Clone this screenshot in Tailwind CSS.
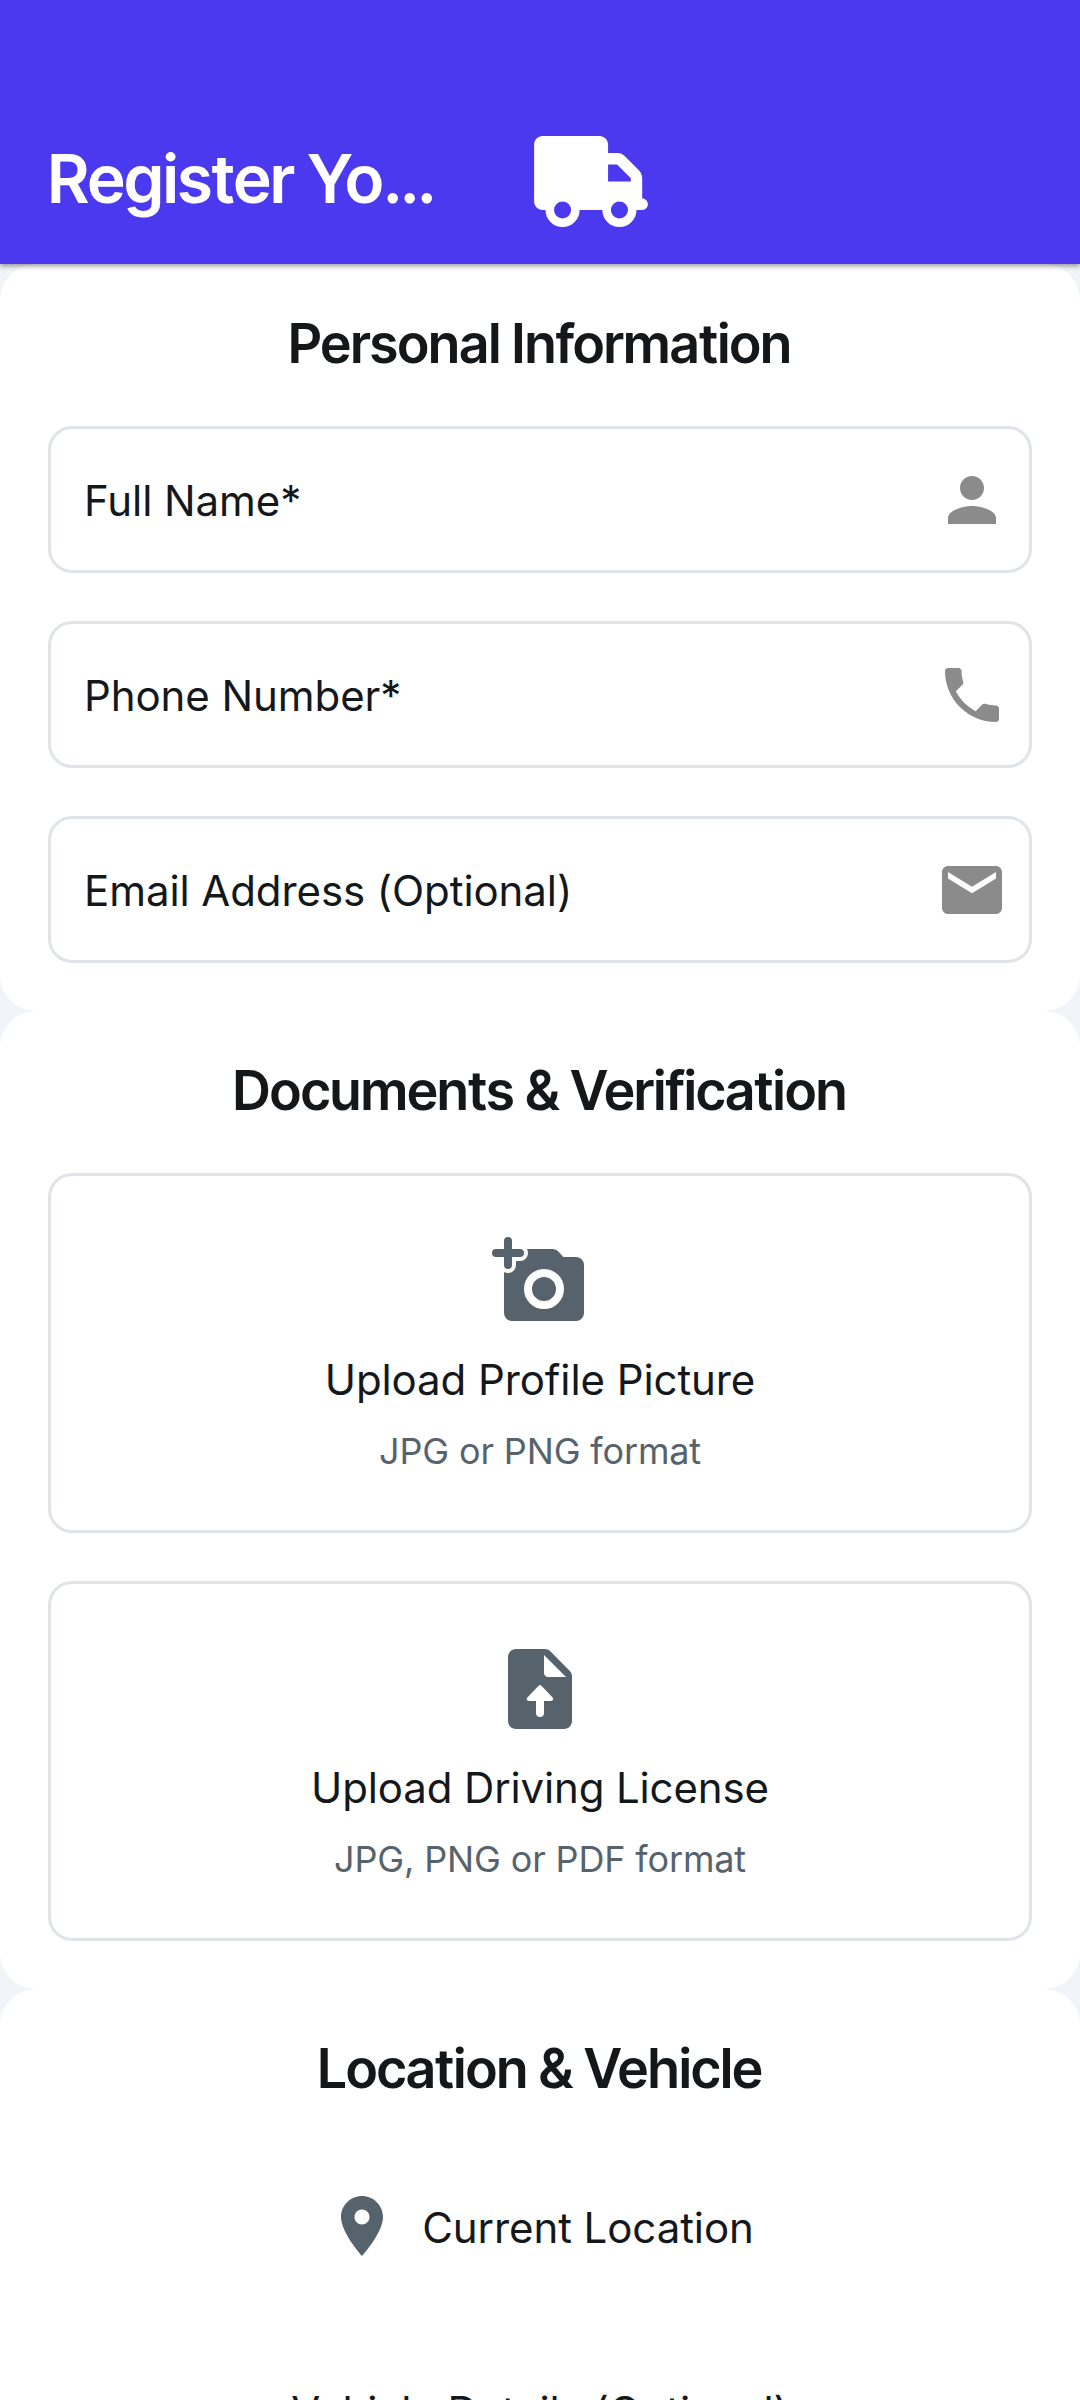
<!DOCTYPE html>
<html lang="en">
<head>
<meta charset="utf-8">
<title>Register Your Vehicle</title>
<script src="https://cdn.jsdelivr.net/npm/@tailwindcss/browser@4"></script>
</head>
<body class="flex h-[2400px] w-[1080px] flex-col overflow-hidden bg-[#f1f4f8] font-['Inter',sans-serif] text-[42px] leading-[51px] font-normal tracking-[-0.08px] text-[#14181b] antialiased">

<header class="relative z-10 flex h-[264px] shrink-0 items-center bg-[#4b39ef] px-12 pt-[96px] shadow-[0_2px_5px_rgba(0,0,0,0.4)]">
  <h1 class="w-[486px] pb-0.5 font-['Inter_Tight','Inter',sans-serif] text-[66px] leading-[80px] font-semibold tracking-normal whitespace-nowrap text-white">Register Yo…</h1>
  <svg class="mt-0.5 h-[91px] w-[114px]" viewBox="0 0 640 512" fill="#fff"><path d="M48 0C21.5 0 0 21.5 0 48V368c0 26.5 21.5 48 48 48H64c0 53 43 96 96 96s96-43 96-96H384c0 53 43 96 96 96s96-43 96-96h32c17.7 0 32-14.3 32-32s-14.3-32-32-32V237.300c0-17-6.700-33.300-18.700-45.300L512 114.700c-12-12-28.300-18.700-45.300-18.700H416V48c0-26.500-21.500-48-48-48H48zM416 160h50.700L544 237.300V256H416V160zM112 416a48 48 0 1 1 96 0 48 48 0 1 1-96 0zm368-48a48 48 0 1 1 0 96 48 48 0 1 1 0-96z"/></svg>
</header>

<section class="h-[747px] shrink-0 rounded-[36px] bg-white px-12 pt-11">
  <h2 class="mb-[46px] text-center font-['Inter_Tight','Inter',sans-serif] text-[54px] leading-[72px] font-semibold tracking-normal">Personal Information</h2>
  <div class="flex flex-col gap-12">
    <div class="flex h-[147px] items-center justify-between rounded-[24px] border-[3px] border-[#e0e3e7] pt-px pr-[21px] pl-[33px]">
      <span class="pt-px">Full Name*</span>
      <svg class="size-[72px]" viewBox="0 0 24 24" fill="#8b8b8b"><path d="M12 12c2.210 0 4-1.790 4-4s-1.790-4-4-4-4 1.790-4 4 1.790 4 4 4zm0 2c-2.670 0-8 1.340-8 4v2h16v-2c0-2.660-5.330-4-8-4z"/></svg>
    </div>
    <div class="flex h-[147px] items-center justify-between rounded-[24px] border-[3px] border-[#e0e3e7] pt-px pr-[21px] pl-[33px]">
      <span class="pt-px">Phone Number*</span>
      <svg class="size-[72px]" viewBox="0 0 24 24" fill="#8b8b8b"><path d="M6.620 10.790c1.440 2.830 3.760 5.140 6.590 6.590l2.200-2.200c.27-.27.67-.36 1.020-.24 1.120.37 2.330.57 3.570.57.55 0 1 .45 1 1V20c0 .55-.45 1-1 1-9.390 0-17-7.610-17-17 0-.55.45-1 1-1h3.500c.55 0 1 .45 1 1 0 1.250.2 2.450.57 3.570.11.35.03.74-.25 1.020l-2.200 2.200z"/></svg>
    </div>
    <div class="flex h-[147px] items-center justify-between rounded-[24px] border-[3px] border-[#e0e3e7] pt-px pr-[21px] pl-[33px]">
      <span class="pt-px">Email Address (Optional)</span>
      <svg class="size-[72px]" viewBox="0 0 24 24" fill="#8b8b8b"><path d="M20 4H4c-1.100 0-1.990.9-1.990 2L2 18c0 1.100.9 2 2 2h16c1.100 0 2-.9 2-2V6c0-1.100-.9-2-2-2zm0 4.200l-8 4.900-8-4.900V6l8 4.900L20 6z"/></svg>
    </div>
  </div>
</section>

<section class="h-[978px] shrink-0 rounded-[36px] bg-white px-12 pt-11">
  <h2 class="mb-[46px] text-center font-['Inter_Tight','Inter',sans-serif] text-[54px] leading-[72px] font-semibold tracking-normal">Documents &amp; Verification</h2>
  <div class="flex flex-col gap-12">
    <div class="flex h-[360px] flex-col items-center rounded-[24px] border-[3px] border-[#e0e3e7] pt-[57px]">
      <svg class="size-[96px]" viewBox="0 0 24 24">
        <path fill="#57636c" d="M3 4H15.120c.56 0 1.100.24 1.470.65L17.830 6H21a2 2 0 0 1 2 2v12a2 2 0 0 1-2 2H5a2 2 0 0 1-2-2z"/>
        <circle cx="13" cy="14" r="4" fill="none" stroke="#fff" stroke-width="2"/>
        <path d="M4 2v6M1 5h6" fill="none" stroke="#fff" stroke-width="4" stroke-linecap="round"/>
        <path d="M4 2v6M1 5h6" fill="none" stroke="#57636c" stroke-width="2" stroke-linecap="round"/>
      </svg>
      <p class="mt-[25px]">Upload Profile Picture</p>
      <p class="mt-6 text-[36px] leading-[45px] tracking-[-0.14px] text-[#57636c]">JPG or PNG format</p>
    </div>
    <div class="flex h-[360px] flex-col items-center rounded-[24px] border-[3px] border-[#e0e3e7] pt-[57px]">
      <svg class="size-[96px]" viewBox="0 0 24 24">
        <path fill="#57636c" d="M6 2c-1.100 0-2 .9-2 2v16c0 1.100.9 2 2 2h12c1.100 0 2-.9 2-2V8.830c0-.53-.21-1.040-.59-1.410l-4.830-4.830c-.37-.38-.88-.59-1.410-.59z"/>
        <path fill="#fff" d="M13 8V3.500L18.500 9H14c-.55 0-1-.45-1-1zM11.650 11.160a.5.5 0 0 1 .7 0L15.150 14.150c.31.31.09.85-.36.85H13v3a1 1 0 0 1-2 0V15H9.210c-.45 0-.67-.54-.36-.85z"/>
      </svg>
      <p class="mt-[25px] tracking-[-0.14px]">Upload Driving License</p>
      <p class="mt-6 text-[36px] leading-[45px] tracking-[-0.14px] text-[#57636c]">JPG, PNG or PDF format</p>
    </div>
  </div>
</section>

<section class="min-h-0 flex-1 overflow-hidden rounded-t-[36px] bg-white px-12 pt-11">
  <h2 class="mb-[46px] text-center font-['Inter_Tight','Inter',sans-serif] text-[54px] leading-[72px] font-semibold tracking-normal">Location &amp; Vehicle</h2>
  <div class="flex h-[150px] items-center justify-center gap-6">
    <svg class="size-[72px]" viewBox="0 0 24 24" fill="#57636c"><path d="M12 2C8.130 2 5 5.130 5 9c0 5.250 7 13 7 13s7-7.750 7-13c0-3.870-3.130-7-7-7zm0 9.500c-1.380 0-2.500-1.120-2.500-2.500s1.120-2.500 2.500-2.500 2.500 1.120 2.500 2.500-1.120 2.500-2.500 2.500z"/></svg>
    <span class="pt-0.5">Current Location</span>
  </div>
  <p class="mt-[85px] text-center">Vehicle Details (Optional)</p>
</section>
</body>
</html>
